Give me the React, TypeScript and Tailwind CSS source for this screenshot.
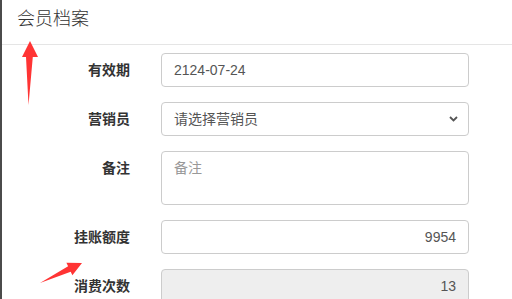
const font = {
  fontFamily: '"Liberation Sans", Arial, "Noto Sans CJK SC", sans-serif',
};

function Row({
  label,
  children,
}: {
  label: string;
  children: React.ReactNode;
}) {
  return (
    <div className="flex items-start mb-[15px]">
      <label className="w-[128px] shrink-0 text-right pt-[7px] text-[14px] leading-[20px] font-bold text-[#333]">
        {label}
      </label>
      <div className="ml-[31px] w-[308px] shrink-0">{children}</div>
    </div>
  );
}

const box =
  "w-full h-[34px] border border-[#ccc] rounded-[4px] px-[12px] text-[14px] leading-[20px] text-[#555] flex items-center";

export default function App() {
  return (
    <div className="relative flex w-[512px] h-[299px] overflow-hidden bg-white" style={font}>
      <div className="w-[2px] shrink-0 bg-[#4b4b4b]" />

      <div className="flex-1 flex flex-col">
        <div className="h-[45px] shrink-0 border-b border-[#e5e5e5] px-[15px] pt-[8px]">
          <h4 className="text-[18px] leading-[22px] font-light text-[#333]">会员档案</h4>
        </div>

        <div className="pt-[8px] shrink-0">
          <Row label="有效期">
            <div className={box}>2124-07-24</div>
          </Row>
          <Row label="营销员">
            <div className={`${box} justify-between pr-[10px]`}>
              <span>请选择营销员</span>
              <svg width="9" height="6" viewBox="0 0 9 6">
                <path d="M1 1 L4.5 4.5 L8 1" fill="none" stroke="#555" strokeWidth="1.8" />
              </svg>
            </div>
          </Row>
          <Row label="备注">
            <div className="w-full h-[54px] border border-[#ccc] rounded-[4px] px-[12px] py-[6px] text-[14px] leading-[20px] text-[#999]">
              备注
            </div>
          </Row>
          <Row label="挂账额度">
            <div className={`${box} justify-end`}>9954</div>
          </Row>
          <Row label="消费次数">
            <div className={`${box} justify-end bg-[#eee]`}>13</div>
          </Row>
        </div>
      </div>

      <svg
        className="absolute left-0 top-0 pointer-events-none"
        width="512"
        height="299"
        viewBox="0 0 512 299"
      >
        <polygon
          points="30,41 38,57 32.8,57 28.5,105 26,57 22,57"
          fill="#ff3434"
        />
        <polygon
          points="82,263 72.4,275.3 70.7,271.7 40,283 68.1,266.3 66.4,262.7"
          fill="#ff3434"
        />
      </svg>
    </div>
  );
}
